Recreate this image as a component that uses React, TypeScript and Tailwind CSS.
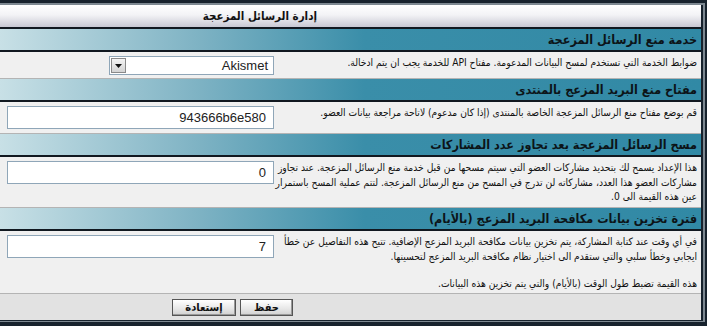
import type { ReactNode } from "react";

const headerBg =
  "bg-[linear-gradient(to_right,#c8e0e6_0%,#7fb3c4_28%,#3a8ea9_52%,#3189a5_100%)]";

function SectionHeader({ title }: { title: string }) {
  return (
    <div
      className={`h-[23px] ${headerBg} border-b-2 border-[#111820] pr-[4px] text-[12.5px] font-bold leading-[21px] text-[#0c1418]`}
    >
      {title}
    </div>
  );
}

function Row({ text, control, h }: { text: ReactNode; control: ReactNode; h: string }) {
  return (
    <div className={`grid grid-cols-[420px_1fr] ${h} bg-[#f0f0f0] border-b border-[#b4b4b4]`}>
      <div className="whitespace-nowrap pr-[4px] pt-[4px] text-[10.2px] leading-[14.5px] text-[#111]">{text}</div>
      <div className="px-[7px] pt-[4px]">{control}</div>
    </div>
  );
}

function TextInput({ value }: { value: string }) {
  return (
    <div className="h-[23px] w-full border border-[#8fa6b8] bg-white pr-[7px] text-[13px] leading-[21px] text-[#222] font-['Liberation_Sans',sans-serif]">
      {value}
    </div>
  );
}

function SelectBox() {
  return (
    <div className="flex h-[19px] w-[165px] items-stretch border border-[#8fa6b8] bg-white">
      <div className="flex-1 pr-[5px] text-[13px] leading-[17px] text-[#222] font-['Liberation_Sans',sans-serif]">
        Akismet
      </div>
      <div className="m-[1px] flex w-[15px] items-center justify-center border border-[#8a8a8a] bg-[linear-gradient(to_bottom,#f4f4f4,#d4d4d4)]">
        <svg width="7" height="4" viewBox="0 0 7 4">
          <path d="M0 0h7L3.5 4z" fill="#111" />
        </svg>
      </div>
    </div>
  );
}

function Button({ label, w }: { label: string; w: string }) {
  return (
    <button
      className={`h-[17px] ${w} border border-[#555] bg-[linear-gradient(to_bottom,#ffffff,#e6e6e6_60%,#d0d0d0)] text-[11px] font-bold leading-[15px] text-[#111] shadow-[inset_-1px_-1px_0_#999]`}
    >
      {label}
    </button>
  );
}

export default function App() {
  return (
    <div
      dir="rtl"
      className="h-[326px] w-[707px] overflow-hidden bg-[#17222d] pt-[3px] pr-[2px] pb-[4px] font-['DejaVu_Sans_Condensed','DejaVu_Sans',sans-serif]"
    >
      <div className="h-full border-t-2 border-r-2 border-b border-[#7d8891]">
        <div className="h-full border-r-2 border-[#17222d]">
          <div className="h-[24px] border-b-2 border-[#111820] bg-[linear-gradient(to_bottom,#ffffff,#f3f3f6_45%,#c8c8d3)] pr-[384px] text-[11.5px] font-bold leading-[23px] text-[#111]">
            إدارة الرسائل المزعجة
          </div>

          <SectionHeader title="خدمة منع الرسائل المزعجة" />
          <Row
            h="h-[27px]"
            text="ضوابط الخدمة التي تستخدم لمسح البيانات المدعومة. مفتاح API للخدمة يجب ان يتم ادخالة."
            control={<SelectBox />}
          />

          <SectionHeader title="مفتاح منع البريد المزعج بالمنتدى" />
          <Row
            h="h-[32px]"
            text="قم بوضع مفتاح منع الرسائل المزعجة الخاصة بالمنتدى (إذا كان مدعوم) لاتاحة مراجعة بيانات العضو."
            control={<TextInput value="943666b6e580" />}
          />

          <SectionHeader title="مسح الرسائل المزعجة بعد تجاوز عدد المشاركات" />
          <Row
            h="h-[51px]"
            text={
              <>
                هذا الإعداد يسمح لك بتحديد مشاركات العضو التي سيتم مسحها من قبل خدمة منع الرسائل المزعجة. عند تجاوز
                <br />
                مشاركات العضو هذا العدد، مشاركاته لن تدرج في المسح من منع الرسائل المزعجة. لتتم عملية المسح باستمرار
                <br />
                عين هذه القيمة الى 0.
              </>
            }
            control={<TextInput value="0" />}
          />

          <SectionHeader title="فترة تخزين بيانات مكافحة البريد المزعج (بالأيام)" />
          <Row
            h="h-[63px]"
            text={
              <>
                <p>
                  في أي وقت عند كتابة المشاركة، يتم تخزين بيانات مكافحة البريد المزعج الإضافية. تتيح هذه التفاصيل عن خطأ
                  <br />
                  ايجابي وخطأ سلبي والتي ستقدم الى اختيار نظام مكافحة البريد المزعج لتحسينها.
                </p>
                <p className="mt-[13px]">هذه القيمة تضبط طول الوقت (بالأيام) والتي يتم تخزين هذه البيانات.</p>
              </>
            }
            control={<TextInput value="7" />}
          />

          <div className="flex h-[26px] items-center gap-[4px] bg-[#e2e2e2] pr-[408px]">
            <Button label="حفظ" w="w-[53px]" />
            <Button label="إستعادة" w="w-[64px]" />
          </div>
        </div>
      </div>
    </div>
  );
}
